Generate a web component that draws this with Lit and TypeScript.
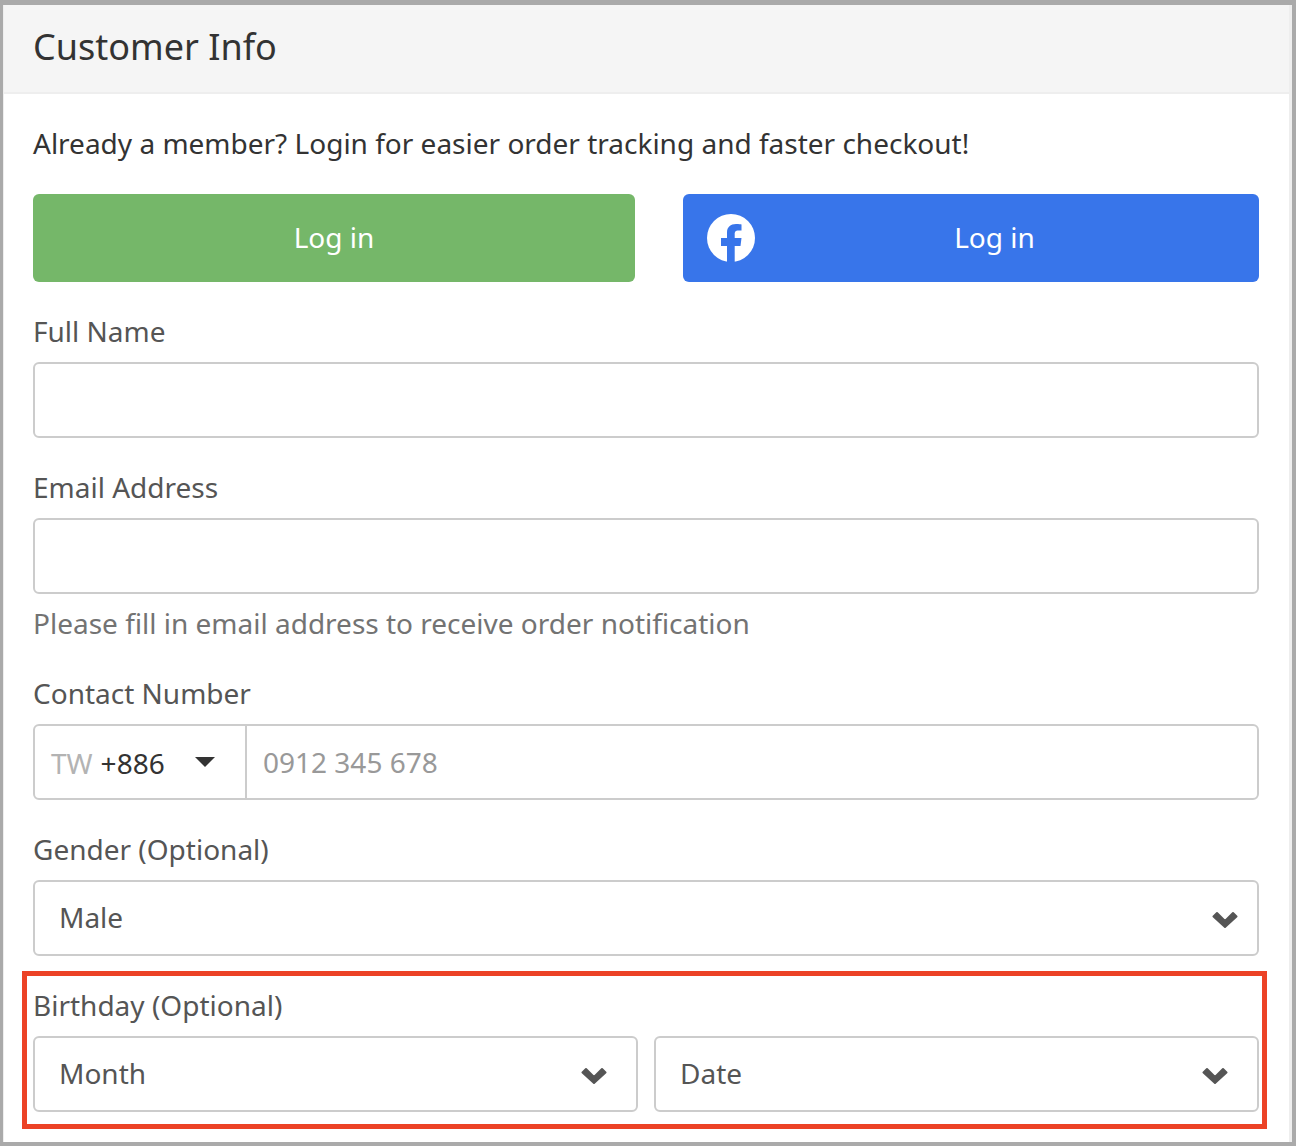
import { LitElement, html, css } from "lit";
import { customElement } from "lit/decorators.js";

const chevron = html`<svg class="chevron" viewBox="0 0 26 17"><path d="M1.500 5.500 L5 2 L13 10 L21 2 L24.500 5.500 L13 16 Z" fill="#555" stroke="#555" stroke-width="2" stroke-linejoin="round"/></svg>`;

@customElement("app-root")
export class AppRoot extends LitElement {
  static styles = css`
    :host {
      display: block;
      width: 1296px;
      height: 1146px;
      box-sizing: border-box;
      position: relative;
      background: #fff;
      border: solid #aaa;
      border-width: 5px 4px 4px 3px;
      font-family: "Noto Sans", sans-serif;
      font-size: 28px;
      line-height: 38px;
      color: #555;
    }

    .panel {
      height: 100%;
      box-sizing: border-box;
      border: solid #eee;
      border-width: 0 3px 0 1px;
    }

    .head {
      height: 89px;
      box-sizing: border-box;
      background: #f5f5f5;
      border-bottom: 2px solid #eee;
      padding: 0 29px;
      font-size: 36px;
      line-height: 84px;
      color: #333;
    }

    .body {
      padding: 30px 30px 0 29px;
    }

    .intro {
      margin: 0 0 32px;
      color: #333;
    }

    .logins {
      display: grid;
      grid-template-columns: 602fr 576fr;
      gap: 48px;
      margin-bottom: 30px;
    }

    .btn {
      position: relative;
      height: 88px;
      box-sizing: border-box;
      border-radius: 6px;
      display: flex;
      align-items: center;
      justify-content: center;
      padding-bottom: 3px;
      color: #fff;
    }

    .btn.green {
      background: #75b769;
    }

    .btn.blue {
      background: #3875ea;
      padding-left: 47px;
    }

    .fb {
      position: absolute;
      left: 24px;
      top: 20px;
      width: 48px;
      height: 48px;
    }

    .group {
      margin-bottom: 30px;
    }

    label {
      display: block;
      margin-bottom: 12px;
    }

    .input {
      height: 76px;
      box-sizing: border-box;
      border: 2px solid #ccc;
      border-radius: 6px;
      background: #fff;
    }

    .help {
      margin-top: 10px;
      margin-bottom: 32px;
      color: #737373;
    }

    .group.has-help {
      margin-bottom: 0;
    }

    .phone {
      display: flex;
      align-items: center;
    }

    .code {
      width: 212px;
      height: 100%;
      box-sizing: border-box;
      border-right: 2px solid #ccc;
      padding: 2px 0 0 16px;
      display: flex;
      align-items: center;
      color: #333;
    }

    .country {
      color: #b3b3b3;
      margin-right: 8px;
    }

    .caret {
      width: 0;
      height: 0;
      margin-left: 30px;
      margin-top: -2px;
      border-left: 10px solid transparent;
      border-right: 10px solid transparent;
      border-top: 10px solid #333;
    }

    .placeholder {
      padding: 0 0 1px 16px;
      color: #999;
    }

    .select {
      display: flex;
      align-items: center;
      justify-content: space-between;
      padding: 0 19px 2px 24px;
    }

    .pair .select {
      padding-right: 29px;
    }

    .chevron {
      width: 26px;
      height: 17px;
      display: block;
      margin-top: 5px;
    }

    .pair {
      display: grid;
      grid-template-columns: 605fr 605fr;
      gap: 16px;
    }

    .highlight {
      position: absolute;
      left: 19px;
      top: 966px;
      width: 1245px;
      height: 158px;
      box-sizing: border-box;
      border: 5px solid #ec4226;
      pointer-events: none;
    }
  `;

  render() {
    return html`
      <div class="panel">
        <div class="head">Customer Info</div>
        <div class="body">
          <p class="intro">Already a member? Login for easier order tracking and faster checkout!</p>
          <div class="logins">
            <div class="btn green">Log in</div>
            <div class="btn blue">
              <svg class="fb" viewBox="0 0 48 48">
                <circle cx="24" cy="24" r="24" fill="#fff" />
                <path d="M20 48V32h-6v-8h6v-5.500C20 13 23.600 10 29 10c2.600 0 5.500 .4 5.500 .4v6h-3C28.400 16.400 27.700 18 27.700 20v4h6.800l-1 8h-5.800v16z" fill="#3875ea" />
              </svg>
              Log in
            </div>
          </div>
          <div class="group">
            <label>Full Name</label>
            <div class="input"></div>
          </div>
          <div class="group has-help">
            <label>Email Address</label>
            <div class="input"></div>
            <div class="help">Please fill in email address to receive order notification</div>
          </div>
          <div class="group">
            <label>Contact Number</label>
            <div class="input phone">
              <div class="code">
                <span class="country">TW</span>+886<span class="caret"></span>
              </div>
              <div class="placeholder">0912 345 678</div>
            </div>
          </div>
          <div class="group">
            <label>Gender (Optional)</label>
            <div class="input select">Male ${chevron}</div>
          </div>
          <div class="group">
            <label>Birthday (Optional)</label>
            <div class="pair">
              <div class="input select">Month ${chevron}</div>
              <div class="input select">Date ${chevron}</div>
            </div>
          </div>
        </div>
      </div>
      <div class="highlight"></div>
    `;
  }
}
